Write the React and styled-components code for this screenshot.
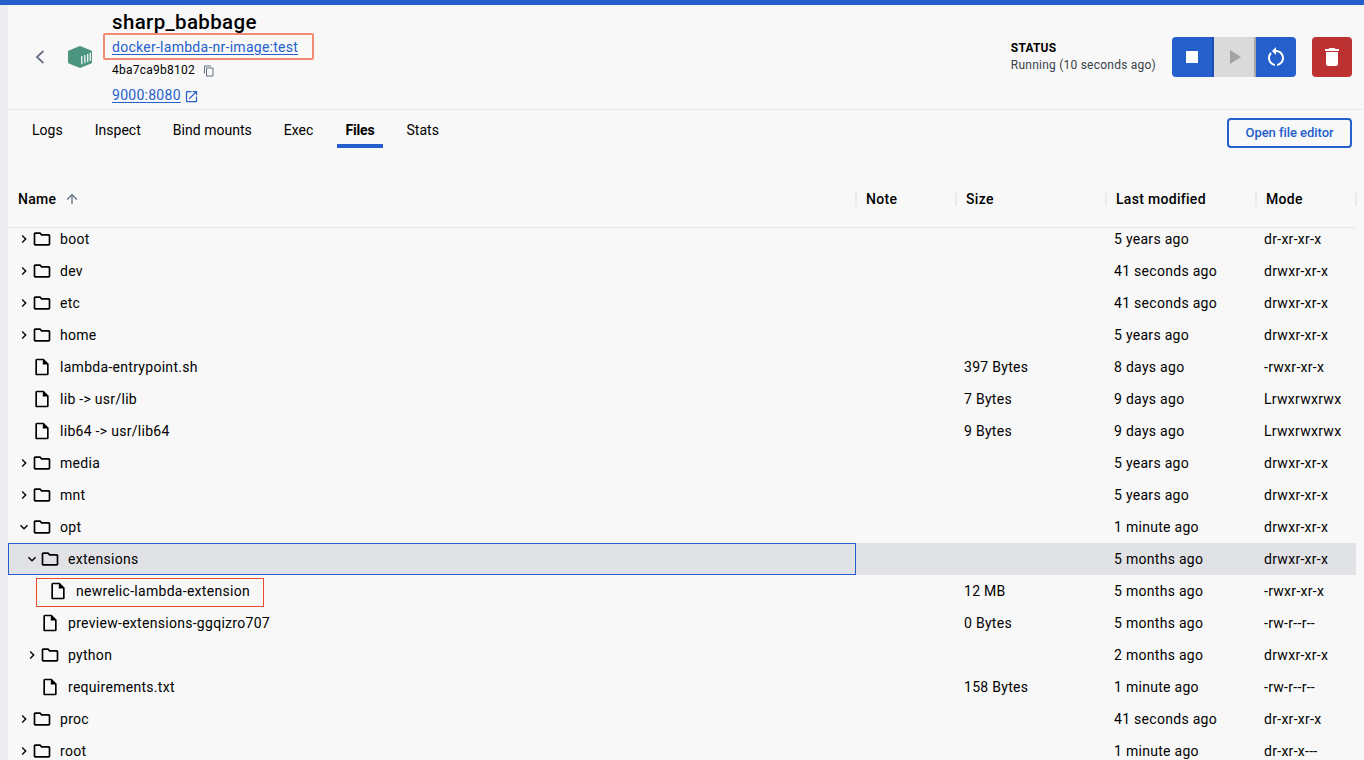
import React from "react";
import styled, { createGlobalStyle, css } from "styled-components";

const Global = createGlobalStyle`
  *, *::before, *::after { box-sizing: border-box; }
  body { margin: 0; overflow: hidden; background: #f8f8f8; color: #000; font-family: Roboto, "Liberation Sans", sans-serif; }
  button { font: inherit; padding: 0; border: 0; background: none; }
`;

const Window = styled.div`
  height: 760px;
  overflow: hidden;
  display: flex;
  flex-direction: column;
  border-top: 5px solid #255fcc;
`;
const Body = styled.div`
  flex: 1;
  min-height: 0;
  display: flex;
`;
const Rail = styled.div`
  flex: none;
  width: 8px;
  background: #ececee;
`;
const Main = styled.main`
  flex: 1;
  min-width: 0;
  display: flex;
  flex-direction: column;
`;
const Header = styled.header`
  flex: none;
  height: 105px;
  display: flex;
  align-items: center;
  padding: 0 12px 0 20px;
  border-bottom: 1px solid #e9e9ea;
`;
const Back = styled.button`
  display: flex;
  margin-right: 16px;
  color: #677285;
`;
const Identity = styled.div`
  flex: 1;
  align-self: flex-start;
  margin-left: 20px;
  padding-top: 5px;
`;
const Title = styled.h1`
  margin: 0;
  font-size: 20.5px;
  line-height: 24px;
  font-weight: 500;
  letter-spacing: 0.35px;
`;
const Link = styled.a`
  color: #255fcc;
  font-size: 14px;
  line-height: 20px;
  letter-spacing: 0.27px;
  text-decoration: underline;
  text-underline-offset: 2px;
`;
const Line = styled.div`
  display: flex;
  align-items: center;
  height: ${(p) => p.$height}px;
`;
const Marked = styled.span`
  display: flex;
  align-items: center;
  height: 27px;
  width: 211px;
  margin: -1px 0 0 -9px;
  padding-left: 7px;
  border: 2px solid #f28b74;
  border-radius: 2px;
`;
const Hash = styled.span`
  font-size: 12px;
  letter-spacing: 0.25px;
`;
const Glyph = styled.span`
  display: flex;
  margin: ${(p) => p.$drop || 0}px 0 0 ${(p) => p.$gap}px;
  color: ${(p) => p.$color};
`;
const Status = styled.div`
  margin-right: 16px;
  font-size: 12px;
  line-height: 17px;
  letter-spacing: 0.23px;
  color: #393f49;
  strong { display: block; color: #000; font-weight: 700; letter-spacing: 0.2px; }
`;
const ButtonGroup = styled.div`
  display: flex;
  border-radius: 4px;
  overflow: hidden;
  margin-right: 16px;
`;
const IconButton = styled.button`
  display: flex;
  align-items: center;
  justify-content: center;
  width: ${(p) => p.$width || 40}px;
  height: 40px;
  color: ${(p) => p.$color || "#fff"};
  background: ${(p) => p.$bg || "#255fcc"};
  border-radius: ${(p) => (p.$round ? 4 : 0)}px;
  ${(p) => p.$edge && css`border-right: 2px solid ${p.$edge};`}
`;
const TabBar = styled.nav`
  flex: none;
  height: 62px;
  display: flex;
  align-items: flex-start;
  padding: 0 12px 0 16px;
`;
const Tab = styled.a`
  height: 38px;
  padding: 10px 8px 0;
  margin-right: 16px;
  font-size: 14px;
  line-height: 21px;
  letter-spacing: ${(p) => (p.$active ? "-0.15px" : "0.02px")};
  font-weight: ${(p) => (p.$active ? 700 : 400)};
  border-bottom: 4px solid ${(p) => (p.$active ? "#255fcc" : "transparent")};
`;
const EditorButton = styled.button`
  margin: 8px 0 0 auto;
  width: 125px;
  height: 30px;
  padding-bottom: 1px;
  border: 2px solid #255fcc;
  border-radius: 4px;
  color: #255fcc;
  font-size: 13px;
  font-weight: 500;
  letter-spacing: -0.05px;
`;
const columns = css`
  display: grid;
  grid-template-columns: 848px 100px 150px 150px 100px;
`;
const HeadRow = styled.div`
  ${columns}
  flex: none;
  width: 1348px;
  height: 56px;
  padding-bottom: 1px;
  align-items: center;
  border-bottom: 1px solid #e9e9ea;
`;
const HeadCell = styled.div`
  display: flex;
  align-items: center;
  height: 14px;
  margin-right: -1px;
  padding-left: 10px;
  border-right: 2px solid #ebebec;
  font-size: 14px;
  font-weight: 500;
  letter-spacing: 0.3px;
  svg { margin-left: 8px; color: #677285; }
`;
const Rows = styled.div`
  flex: 1;
  min-height: 0;
  overflow: hidden;
  margin-top: -5px;
`;
const Row = styled.div`
  ${columns}
  width: 1348px;
  height: 32px;
  background: ${(p) => (p.$selected ? "#e1e2e6" : "transparent")};
`;
const Cell = styled.div`
  display: flex;
  align-items: center;
  padding-left: 8px;
  font-size: 14px;
  letter-spacing: 0.29px;
  white-space: nowrap;
`;
const NameCell = styled(Cell)`
  position: relative;
  padding-left: ${(p) => 8 + p.$depth * 8}px;
  ${(p) => p.$selected && css`box-shadow: inset 0 0 0 1px #255fcc;`}
`;
const Toggle = styled.span`
  display: flex;
  width: 16px;
`;
const Kind = styled.span`
  display: flex;
  width: 20px;
  margin-right: 8px;
`;
const Callout = styled.span`
  position: absolute;
  left: 28px;
  top: 3px;
  width: 228px;
  height: 29px;
  border: 1px solid #ec4a2f;
`;

const PATHS = {
  right: "M10 6 8.59 7.41 13.17 12l-4.58 4.59L10 18l6-6z",
  down: "M16.59 8.59 12 13.17 7.41 8.59 6 10l6 6 6-6z",
  folder: "m9.17 6 2 2H20v10H4V6zM10 4H4c-1.1 0-1.99.9-1.99 2L2 18c0 1.1.9 2 2 2h16c1.1 0 2-.9 2-2V8c0-1.1-.9-2-2-2h-8z",
  file: "M14 2H6c-1.1 0-1.99.9-1.99 2L4 20c0 1.1.89 2 1.99 2H18c1.1 0 2-.9 2-2V8zM6 20V4h7v5h5v11z",
  copy: "M16 1H4c-1.1 0-2 .9-2 2v14h2V3h12zm3 4H8c-1.1 0-2 .9-2 2v14c0 1.1.9 2 2 2h11c1.1 0 2-.9 2-2V7c0-1.1-.9-2-2-2m0 16H8V7h11z",
  open: "M19 19H5V5h7V3H5c-1.11 0-2 .9-2 2v14c0 1.1.89 2 2 2h14c1.1 0 2-.9 2-2v-7h-2zM14 3v2h3.59l-9.83 9.83 1.41 1.41L19 6.41V10h2V3z",
  stop: "M6 6h12v12H6z",
  play: "M8 5v14l11-7z",
  restart: "M12 5V2L8 6l4 4V7c3.31 0 6 2.69 6 6 0 2.97-2.17 5.43-5 5.91v2.02c3.95-.49 7-3.85 7-7.93 0-4.42-3.58-8-8-8m-6 8c0-1.65.67-3.15 1.76-4.24L6.34 7.34C4.9 8.79 4 10.79 4 13c0 4.08 3.05 7.44 7 7.93v-2.02c-2.83-.48-5-2.94-5-5.91",
  trash: "M6 19c0 1.1.9 2 2 2h8c1.1 0 2-.9 2-2V7H6zM19 4h-3.5l-1-1h-5l-1 1H5v2h14z",
  up: "m4 12 1.41 1.41L11 7.83V20h2V7.83l5.58 5.59L20 12l-8-8z",
};

const Icon = ({ name, size = 24 }) => (
  <svg width={size} height={size} viewBox="0 0 24 24" fill="currentColor">
    <path d={PATHS[name]} />
  </svg>
);

const ContainerLogo = () => (
  <svg width="24" height="22" viewBox="0 0 24 22">
    <path d="M12 0 23.2 4.6Q24 5 24 6V16Q24 17 23.2 17.4L12 22 .8 17.4Q0 17 0 16V6Q0 5 .8 4.6Z" fill="#4b9480" />
    <path d="M13.8 10.1v8.2M16.9 9v8.2M19.7 7.9v8.2M22.3 6.8v8" stroke="#f8f8f8" strokeWidth="1.3" />
  </svg>
);

const FILES = [
  ["boot", "closed", 0, "", "5 years ago", "dr-xr-xr-x"],
  ["dev", "closed", 0, "", "41 seconds ago", "drwxr-xr-x"],
  ["etc", "closed", 0, "", "41 seconds ago", "drwxr-xr-x"],
  ["home", "closed", 0, "", "5 years ago", "drwxr-xr-x"],
  ["lambda-entrypoint.sh", "file", 0, "397 Bytes", "8 days ago", "-rwxr-xr-x"],
  ["lib -> usr/lib", "file", 0, "7 Bytes", "9 days ago", "Lrwxrwxrwx"],
  ["lib64 -> usr/lib64", "file", 0, "9 Bytes", "9 days ago", "Lrwxrwxrwx"],
  ["media", "closed", 0, "", "5 years ago", "drwxr-xr-x"],
  ["mnt", "closed", 0, "", "5 years ago", "drwxr-xr-x"],
  ["opt", "open", 0, "", "1 minute ago", "drwxr-xr-x"],
  ["extensions", "open", 1, "", "5 months ago", "drwxr-xr-x"],
  ["newrelic-lambda-extension", "file", 2, "12 MB", "5 months ago", "-rwxr-xr-x"],
  ["preview-extensions-ggqizro707", "file", 1, "0 Bytes", "5 months ago", "-rw-r--r--"],
  ["python", "closed", 1, "", "2 months ago", "drwxr-xr-x"],
  ["requirements.txt", "file", 1, "158 Bytes", "1 minute ago", "-rw-r--r--"],
  ["proc", "closed", 0, "", "41 seconds ago", "dr-xr-xr-x"],
  ["root", "closed", 0, "", "1 minute ago", "dr-xr-x---"],
];

const FileRow = ({ file: [name, kind, depth, size, modified, mode] }) => {
  const selected = name === "extensions";
  return (
    <Row $selected={selected}>
      <NameCell $depth={depth} $selected={selected}>
        <Toggle>{kind !== "file" && <Icon name={kind === "open" ? "down" : "right"} size={16} />}</Toggle>
        <Kind><Icon name={kind === "file" ? "file" : "folder"} size={20} /></Kind>
        {name}
        {depth === 2 && <Callout />}
      </NameCell>
      <Cell />
      <Cell>{size}</Cell>
      <Cell>{modified}</Cell>
      <Cell>{mode}</Cell>
    </Row>
  );
};

export default function App() {
  return (
    <Window>
      <Global />
      <Body>
        <Rail />
        <Main>
          <Header>
            <Back>
              <svg width="24" height="24" viewBox="0 0 24 24" fill="none" stroke="currentColor" strokeWidth="1.8">
                <path d="M15.4 6 9 12l6.4 6" />
              </svg>
            </Back>
            <ContainerLogo />
            <Identity>
              <Title>sharp_babbage</Title>
              <Line $height={26}><Marked><Link>docker-lambda-nr-image:test</Link></Marked></Line>
              <Line $height={20}>
                <Hash>4ba7ca9b8102</Hash>
                <Glyph $gap={8} $drop={1} $color="#677285"><Icon name="copy" size={12} /></Glyph>
              </Line>
              <Line $height={30}>
                <Link>9000:8080</Link>
                <Glyph $gap={3} $drop={2} $color="#255fcc"><Icon name="open" size={15} /></Glyph>
              </Line>
            </Identity>
            <Status><strong>STATUS</strong>Running (10 seconds ago)</Status>
            <ButtonGroup>
              <IconButton $width={42} $edge="#1d4db0"><Icon name="stop" /></IconButton>
              <IconButton $width={42} $bg="#dadada" $color="#a3a3a3" $edge="#a8a8a8"><Icon name="play" /></IconButton>
              <IconButton><Icon name="restart" /></IconButton>
            </ButtonGroup>
            <IconButton $bg="#bc3233" $round><Icon name="trash" /></IconButton>
          </Header>
          <TabBar>
            {["Logs", "Inspect", "Bind mounts", "Exec", "Files", "Stats"].map((t) => (
              <Tab key={t} $active={t === "Files"}>{t}</Tab>
            ))}
            <EditorButton>Open file editor</EditorButton>
          </TabBar>
          <HeadRow>
            <HeadCell>Name <Icon name="up" size={16} /></HeadCell>
            <HeadCell>Note</HeadCell>
            <HeadCell>Size</HeadCell>
            <HeadCell>Last modified</HeadCell>
            <HeadCell>Mode</HeadCell>
          </HeadRow>
          <Rows>
            {FILES.map((f) => <FileRow key={f[0]} file={f} />)}
          </Rows>
        </Main>
      </Body>
    </Window>
  );
}
